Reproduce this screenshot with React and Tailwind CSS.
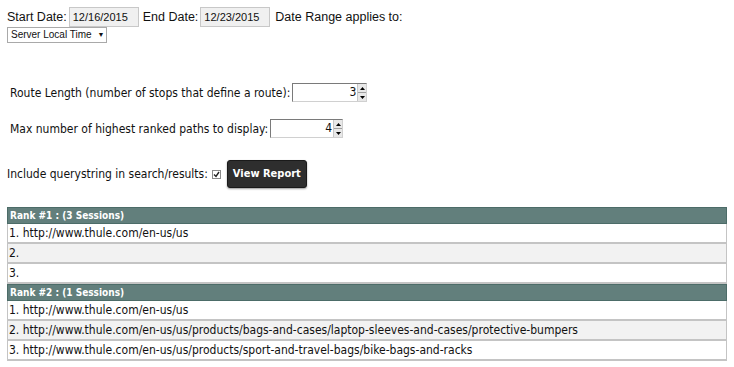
import React from "react";

function Spin({ value, width }) {
  return (
    <span className={`inline-flex items-stretch h-[19px] border border-[#7a7a7a] border-r-[#d0d0d0] border-b-[#d0d0d0] bg-white align-middle ${width}`}>
      <span className="flex-1 text-right pr-[1px] text-[12px] leading-[17px]">{value}</span>
      <span className="flex flex-col w-[9px] bg-[#e8e8e8] border-l border-[#c8c8c8]">
        <span className="flex-1 flex items-center justify-center border-b border-[#a0a0a0]">
          <svg width="5" height="3" viewBox="0 0 5 3"><path d="M0 3 L2.5 0 L5 3 Z" fill="#000" /></svg>
        </span>
        <span className="flex-1 flex items-center justify-center">
          <svg width="5" height="3" viewBox="0 0 5 3"><path d="M0 0 L2.5 3 L5 0 Z" fill="#000" /></svg>
        </span>
      </span>
    </span>
  );
}

function Header({ children }) {
  return (
    <div className="h-[17px] bg-[#627f7c] border border-[#4c6c68] text-white text-[10px] leading-[15px] pl-[2px] font-bold">
      {children}
    </div>
  );
}

function Row({ children, alt }) {
  return (
    <div className={`h-[20px] border-b-2 border-[#c4c4c4] border-x border-x-[#c4c4c4] text-[12px] leading-[18px] pl-[1px] text-[#111] ${alt ? "bg-[#f2f2f2]" : "bg-white"}`}>
      {children}
    </div>
  );
}

export default function App() {
  const font = { fontFamily: "Tahoma, 'DejaVu Sans Condensed', 'Liberation Sans', sans-serif" };
  return (
    <div className="w-[734px] h-[367px] bg-white text-[#111] relative" style={{ fontFamily: "'Liberation Sans', Arial, sans-serif" }}>
      <div className="pl-[7px] pt-[7px] flex items-center text-[12.5px] leading-[20px]">
        <span>Start Date:</span>
        <span className="ml-[2px] w-[70px] h-[20px] border border-[#c8c8c8] bg-[#f0f0f0] text-[11px] leading-[18px] pl-[3px]">12/16/2015</span>
        <span className="ml-[4px]">End Date:</span>
        <span className="ml-[2px] w-[70px] h-[20px] border border-[#c8c8c8] bg-[#f0f0f0] text-[11px] leading-[18px] pl-[3px]">12/23/2015</span>
        <span className="ml-[5px]">Date Range applies to:</span>
      </div>
      <div className="pl-[7px] flex">
        <span className="inline-flex items-center whitespace-nowrap h-[16px] w-[100px] border border-[#a9a9a9] bg-white text-[10px] leading-[14px] pl-[3px]">
          Server Local Time <span className="ml-[6px] text-[7px]">▼</span>
        </span>
      </div>

      <div style={font}>
        <div className="pl-[10px] mt-[40px] flex items-center text-[12px] h-[19px]">
          <span>Route Length (number of stops that define a route):</span>
          <span className="ml-[2px] flex"><Spin value="3" width="w-[75px]" /></span>
        </div>
        <div className="pl-[10px] mt-[17px] flex items-center text-[12px] h-[19px]">
          <span>Max number of highest ranked paths to display:</span>
          <span className="ml-[2px] flex"><Spin value="4" width="w-[73px]" /></span>
        </div>
        <div className="pl-[7px] mt-[22px] flex items-center text-[12px] h-[28px]">
          <span>Include querystring in search/results:</span>
          <span className="ml-[4px] w-[9px] h-[9px] border border-[#8a8a8a] bg-white flex items-center justify-center">
            <svg width="7" height="7" viewBox="0 0 7 7"><path d="M1 3.5 L3 5.5 L6 1" stroke="#222" strokeWidth="1.4" fill="none" /></svg>
          </span>
          <span className="ml-[6px] w-[80px] h-[28px] rounded-[3px] bg-[#2e2e2e] border border-[#1a1a1a] text-white text-[11px] font-bold flex items-center justify-center shadow-[0_1px_2px_rgba(0,0,0,0.4)]">View Report</span>
        </div>

        <div className="mx-[7px] mt-[19px] w-[720px]">
          <Header>Rank #1 : (3 Sessions)</Header>
          <Row>1. http://www.thule.com/en-us/us</Row>
          <Row alt>2.</Row>
          <Row>3.</Row>
          <Header>Rank #2 : (1 Sessions)</Header>
          <Row>1. http://www.thule.com/en-us/us</Row>
          <Row alt>2. http://www.thule.com/en-us/us/products/bags-and-cases/laptop-sleeves-and-cases/protective-bumpers</Row>
          <Row>3. http://www.thule.com/en-us/us/products/sport-and-travel-bags/bike-bags-and-racks</Row>
        </div>
      </div>
    </div>
  );
}
